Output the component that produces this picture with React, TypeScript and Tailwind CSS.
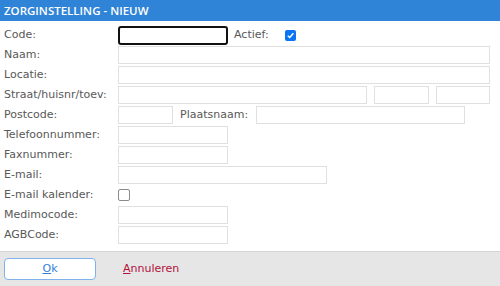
import React from 'react';

const labelCls = 'w-[114px] shrink-0 text-[11px] text-[#585858]';
const inputCls = 'h-[18px] border border-[#e0e0e0] bg-white';

function Row({ label, children }: { label: string; children?: React.ReactNode }) {
  return (
    <div className="flex h-[20px] items-center">
      <div className={labelCls}>{label}</div>
      {children}
    </div>
  );
}

function Check({ checked }: { checked?: boolean }) {
  if (checked) {
    return (
      <div className="flex h-[11px] w-[11px] items-center justify-center rounded-[2px] bg-[#0b74f5]">
        <svg width="9" height="9" viewBox="0 0 10 10">
          <path d="M2 5.2 L4.2 7.3 L8.2 2.6" fill="none" stroke="white" strokeWidth="1.6" />
        </svg>
      </div>
    );
  }
  return <div className="h-[12px] w-[12px] rounded-[2px] border border-[#8a8a8a] bg-white" />;
}

export default function App() {
  return (
    <div className="flex h-[286px] w-[500px] flex-col bg-white font-['DejaVu_Sans',sans-serif]">
      <div className="flex h-[21px] items-center bg-[#2f84d8] pl-[4px] font-['Open_Sans',sans-serif] text-[11.5px] font-semibold text-white">
        ZORGINSTELLING - NIEUW
      </div>
      <div className="flex flex-1 flex-col pl-[4px] pt-[4px]">
        <Row label="Code:">
          <div className="h-[19px] w-[110px] rounded-[3px] border-2 border-[#111111] bg-white" />
          <span className="ml-[6px] w-[51px] text-[11px] text-[#585858]">Actief:</span>
          <Check checked />
        </Row>
        <Row label="Naam:">
          <div className={`${inputCls} w-[372px]`} />
        </Row>
        <Row label="Locatie:">
          <div className={`${inputCls} w-[372px]`} />
        </Row>
        <Row label="Straat/huisnr/toev:">
          <div className="flex gap-[7px]">
            <div className={`${inputCls} w-[249px]`} />
            <div className={`${inputCls} w-[55px]`} />
            <div className={`${inputCls} w-[54px]`} />
          </div>
        </Row>
        <Row label="Postcode:">
          <div className={`${inputCls} w-[55px]`} />
          <span className="ml-[7px] w-[76px] text-[11px] text-[#585858]">Plaatsnaam:</span>
          <div className={`${inputCls} w-[209px]`} />
        </Row>
        <Row label="Telefoonnummer:">
          <div className={`${inputCls} w-[110px]`} />
        </Row>
        <Row label="Faxnummer:">
          <div className={`${inputCls} w-[110px]`} />
        </Row>
        <Row label="E-mail:">
          <div className={`${inputCls} w-[209px]`} />
        </Row>
        <Row label="E-mail kalender:">
          <Check />
        </Row>
        <Row label="Medimocode:">
          <div className={`${inputCls} w-[110px]`} />
        </Row>
        <Row label="AGBCode:">
          <div className={`${inputCls} w-[110px]`} />
        </Row>
      </div>
      <div className="flex h-[35px] items-center border-t border-[#d4d4d4] bg-[#e6e6e6] pl-[4px]">
        <button className="flex h-[22px] w-[92px] items-center justify-center rounded-[4px] border border-[#7fb2ea] bg-white text-[11px] text-[#2f7fd6]">
          <span><span className="underline">O</span>k</span>
        </button>
        <span className="ml-[27px] text-[11px] text-[#b3123c]">
          <span className="underline">A</span>nnuleren
        </span>
      </div>
    </div>
  );
}
